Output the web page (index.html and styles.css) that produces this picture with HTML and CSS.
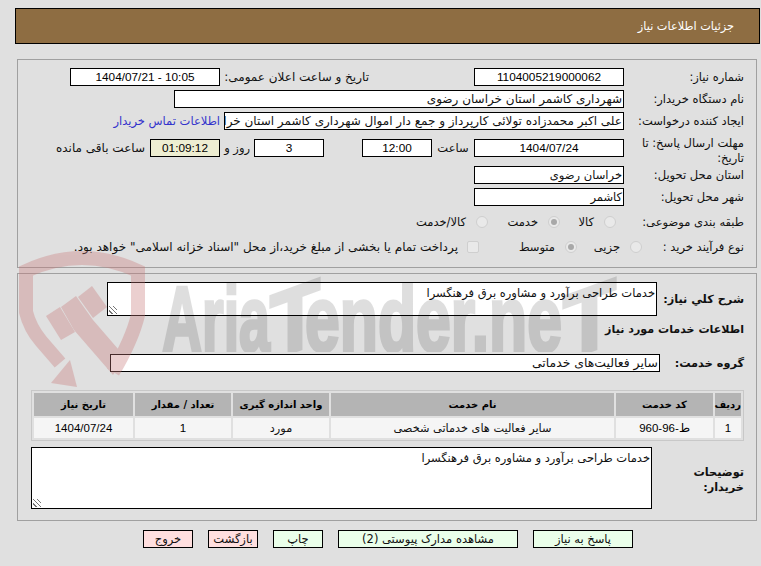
FILE: index.html
```html
<!DOCTYPE html>
<html lang="fa" dir="rtl">
<head>
    <title>جزئیات اطلاعات نیاز</title>
    <link rel="stylesheet" href="styles.css">
</head>
<body>
    <!-- watermark lies over the whole page -->
    <svg class="watermark" width="761" height="566" viewBox="0 0 761 566" aria-hidden="true">
        <defs>
            <clipPath id="baseline"><rect x="150" y="260" width="480" height="92"/></clipPath>
        </defs>
        <g class="wm-red">
            <path class="wm-shield" d="M60 363 L41 341 Q30 328 26 312 L26 271 Q82 245 138 271 L138 315 Q132 340 113 372"/>
            <polygon points="70,360 77,387 51,383"/>
            <polygon points="46,316 60,307 75,332 61,340"/>
            <polygon points="61,307 76,296 93,320 125,357 113,375 74,330"/>
            <polygon points="78,297 92,286 107,307 93,318"/>
        </g>
        <g class="wm-grey" clip-path="url(#baseline)">
            <text x="162" y="351" textLength="108" lengthAdjust="spacingAndGlyphs">Aria</text>
            <text x="270" y="351" textLength="50" lengthAdjust="spacingAndGlyphs" transform="translate(295 320) skewY(-20) translate(-295 -320)">T</text>
            <text x="305" y="351" textLength="257" lengthAdjust="spacingAndGlyphs">ender.ne</text>
            <text x="563" y="351" textLength="53" lengthAdjust="spacingAndGlyphs" transform="translate(590 320) skewY(-20) translate(-590 -320)">T</text>
        </g>
    </svg>

    <header class="title-bar"><span>جزئیات اطلاعات نیاز</span></header>

    <section class="panel info-panel">
        <div class="row">
            <label class="lbl">شماره نیاز:</label>
            <div class="box w-150 center num">1104005219000062</div>
            <label class="lbl-pub">تاریخ و ساعت اعلان عمومی:</label>
            <div class="box w-150 center num ltr">1404/07/21 - 10:05</div>
        </div>
        <div class="row">
            <label class="lbl">نام دستگاه خریدار:</label>
            <div class="box w-450 wide-text">شهرداری کاشمر استان خراسان رضوی</div>
        </div>
        <div class="row">
            <label class="lbl">ایجاد کننده درخواست:</label>
            <div class="box w-400 wide-text">علی اکبر محمدزاده تولائی کارپرداز و جمع دار اموال شهرداری کاشمر استان خراسان رضوی</div>
            <a class="contact">اطلاعات تماس خریدار</a>
        </div>
        <div class="row r-deadline">
            <label class="lbl lbl-wrap">مهلت ارسال پاسخ: تا تاریخ:</label>
            <div class="box w-150 center num">1404/07/24</div>
            <span class="t-hour">ساعت</span>
            <div class="box w-70 center num">12:00</div>
            <div class="box w-70 center num m-days">3</div>
            <span class="t-days">روز و</span>
            <div class="box w-70 center num timer">01:09:12</div>
            <span class="t-left">ساعت باقی مانده</span>
        </div>
        <div class="row">
            <label class="lbl">استان محل تحویل:</label>
            <div class="box w-150">خراسان رضوی</div>
        </div>
        <div class="row">
            <label class="lbl">شهر محل تحویل:</label>
            <div class="box w-150">کاشمر</div>
        </div>
        <div class="row r-opts">
            <label class="lbl lbl-cat">طبقه بندی موضوعی:</label>
            <span class="radio"></span><span class="opt o-kala">کالا</span>
            <span class="radio on"></span><span class="opt o-khed">خدمت</span>
            <span class="radio"></span><span class="opt">کالا/خدمت</span>
        </div>
        <div class="row r-opts">
            <label class="lbl lbl-type">نوع فرآیند خرید :</label>
            <span class="radio"></span><span class="opt o-jozi">جزیی</span>
            <span class="radio on"></span><span class="opt o-mot">متوسط</span>
            <span class="check"></span><span class="opt long-text">پرداخت تمام یا بخشی از مبلغ خرید،از محل "اسناد خزانه اسلامی" خواهد بود.</span>
        </div>
    </section>

    <section class="panel detail-panel">
        <div class="row r-sharh">
            <label class="lbl-b l-sharh">شرح کلي نیاز:</label>
            <div class="box area a-sharh">خدمات طراحی برآورد و مشاوره برق فرهنگسرا<i class="grip"></i></div>
        </div>
        <div class="sub-head">اطلاعات خدمات مورد نیاز</div>
        <div class="row r-group">
            <label class="lbl-b l-group">گروه خدمت:</label>
            <div class="box w-550 group-text">سایر فعالیت‌های خدماتی</div>
        </div>
        <table class="items">
            <tr>
                <th class="c-1">ردیف</th>
                <th class="c-2">کد خدمت</th>
                <th class="c-3">نام خدمت</th>
                <th class="c-4">واحد اندازه گیری</th>
                <th class="c-5">تعداد / مقدار</th>
                <th class="c-6">تاریخ نیاز</th>
            </tr>
            <tr>
                <td class="num">1</td>
                <td class="num">ط-96-960</td>
                <td>سایر فعالیت های خدماتی شخصی</td>
                <td>مورد</td>
                <td class="num">1</td>
                <td class="num">1404/07/24</td>
            </tr>
        </table>
        <div class="row r-notes">
            <label class="lbl-b l-notes">توضیحات خریدار:</label>
            <div class="box area a-notes">خدمات طراحی برآورد و مشاوره برق فرهنگسرا<i class="grip"></i></div>
        </div>
    </section>

    <footer class="actions">
        <button class="btn go b-reply">پاسخ به نیاز</button>
        <button class="btn go b-docs">مشاهده مدارک پیوستی (2)</button>
        <button class="btn go b-small">چاپ</button>
        <button class="btn stop b-small">بازگشت</button>
        <button class="btn stop b-small">خروج</button>
    </footer>
</body>
</html>
```

FILE: styles.css
```css
* {
    box-sizing: border-box;
}
body {
    margin: 0;
    width: 761px;
    height: 566px;
    overflow: hidden;
    background-color: #e0e0e0;
    color: #111;
    font-family: "DejaVu Sans", sans-serif;
    font-size: 11.5px;
    position: relative;
}
.num {
    font-family: "Liberation Sans", sans-serif;
    font-size: 11.8px;
    color: #000;
}
.ltr {
    direction: ltr;
}
.wide-text {
    font-size: 12px;
}
.long-text {
    font-size: 12.05px;
}
.group-text {
    font-size: 12.4px;
}

/* watermark */
.watermark {
    position: absolute;
    left: 0;
    top: 0;
    z-index: 2;
    pointer-events: none;
}
.wm-red {
    fill: #c87878;
    opacity: 0.35;
}
.wm-shield {
    fill: none;
    stroke: #c87878;
    stroke-width: 14;
}
.wm-grey {
    fill: #000;
    stroke: #000;
    stroke-width: 3.5;
    opacity: 0.125;
    font-family: "Liberation Sans", sans-serif;
    font-weight: bold;
    font-size: 92px;
    direction: ltr;
}

/* title */
.title-bar {
    margin: 8px 1px 0 15px;
    height: 36px;
    background-color: #8e6d42;
    border: 1px solid #000;
    color: #fff;
    font-size: 11.3px;
    display: flex;
    align-items: center;
    padding-right: 25px;
}

/* panels */
.panel {
    border: 1px solid #a0a0a0;
    margin: 0 4px 0 17px;
    padding-top: 8px;
}
.info-panel {
    margin-top: 15px;
    height: 209px;
}
.detail-panel {
    margin-top: 5px;
    height: 248px;
}
.row {
    display: flex;
    align-items: center;
    height: 18px;
    margin-bottom: 4px;
}
.lbl {
    width: 132px;
    padding: 0 12px 0 8px;
    flex: none;
    line-height: 15px;
    white-space: nowrap;
}
.lbl-wrap {
    white-space: normal;
    padding-top: 5px;
}
.box {
    height: 18px;
    border: 1px solid #000;
    background-color: #fff;
    padding: 0 1px;
    line-height: 16px;
    white-space: nowrap;
    overflow: hidden;
    flex: none;
}
.center {
    text-align: center;
}
.w-150 { width: 150px; }
.w-450 { width: 450px; }
.w-400 { width: 400px; }
.w-70 { width: 70px; }
.w-550 { width: 550px; }
.lbl-pub {
    margin-right: 105px;
    width: 149px;
    flex: none;
    white-space: nowrap;
    font-size: 12px;
}
.contact {
    color: #3333cc;
    margin-right: 4px;
    white-space: nowrap;
}
.r-deadline {
    margin-top: 9px;
    margin-bottom: 9px;
}
.t-hour {
    width: 42px;
    text-align: center;
}
.m-days {
    margin-right: 38px;
}
.t-days {
    width: 34px;
    padding-right: 4px;
    white-space: nowrap;
}
.timer {
    background-color: #eeeed2;
}
.t-left {
    margin-right: 5px;
    white-space: nowrap;
    font-size: 12px;
}
.r-opts {
    margin-top: 7px;
    margin-bottom: 7px;
}
.lbl-type {
    width: 114px;
}
.lbl-cat {
    width: 140px;
}
.radio {
    width: 12px;
    height: 12px;
    border-radius: 50%;
    border: 1px solid #cfcfcf;
    background-color: #e9e9e9;
    margin-left: 10px;
    flex: none;
    display: flex;
    align-items: center;
    justify-content: center;
}
.radio.on::after {
    content: "";
    width: 6px;
    height: 6px;
    border-radius: 50%;
    background-color: #a8a8a8;
}
.check {
    width: 12px;
    height: 12px;
    border: 1px solid #cfcfcf;
    background-color: #e9e9e9;
    border-radius: 2px;
    margin-left: 9px;
    flex: none;
}
.opt {
    white-space: nowrap;
}
.o-kala { width: 34px; }
.o-khed { width: 50px; }
.o-jozi { width: 43px; }
.o-mot { width: 76px; }

/* detail panel */
.lbl-b {
    font-weight: bold;
    font-size: 11.3px;
    flex: none;
    padding-right: 12px;
    line-height: 15px;
}
.area {
    position: relative;
    white-space: normal;
    padding-top: 2px;
}
.grip {
    position: absolute;
    left: 1px;
    bottom: 1px;
    width: 8px;
    height: 8px;
    background: repeating-linear-gradient(45deg, transparent 0 2px, #777 2px 3px);
}
.r-sharh {
    height: 34px;
    margin-bottom: 0;
}
.l-sharh {
    width: 99px;
    white-space: nowrap;
}
.a-sharh {
    width: 550px;
    height: 34px;
}
.sub-head {
    font-weight: bold;
    font-size: 11.1px;
    padding-right: 12px;
    margin-top: 6px;
    height: 16px;
    line-height: 16px;
    white-space: nowrap;
}
.r-group {
    margin-top: 16px;
    margin-bottom: 0;
}
.l-group {
    width: 96px;
    white-space: nowrap;
}
.items {
    margin: 18px 12px 0 0;
    width: 713px;
    border: 1px solid #c8c8c8;
    border-spacing: 2px;
    table-layout: fixed;
    font-size: 11.3px;
}
.items th {
    background-color: #b4b4b4;
    height: 23px;
    padding: 0;
    font-size: 10px;
    color: #000;
    white-space: nowrap;
}
.items td {
    background-color: #f5f5f5;
    height: 20px;
    padding: 0;
    text-align: center;
}
.items td.num {
    font-size: 11.5px;
}
.c-1 { width: 26px; }
.c-2 { width: 97px; }
.c-3 { width: 283px; }
.c-4 { width: 96px; }
.c-5 { width: 96px; }
.c-6 { width: 99px; }
.r-notes {
    margin-top: 6px;
    height: 62px;
}
.l-notes {
    width: 104px;
    padding-left: 30px;
    padding-top: 3px;
}
.a-notes {
    width: 621px;
    height: 62px;
}

/* buttons */
.actions {
    display: flex;
    gap: 15px;
    padding-right: 128px;
    margin-top: 9px;
}
.btn {
    height: 18px;
    border: 1px solid #000;
    padding: 0;
    font-family: "DejaVu Sans", sans-serif;
    font-size: 11.5px;
    color: #111;
}
.go {
    background-color: #eaffea;
}
.stop {
    background-color: #ffdfdf;
}
.b-reply { width: 100px; }
.b-docs { width: 180px; }
.b-small { width: 50px; }
```
